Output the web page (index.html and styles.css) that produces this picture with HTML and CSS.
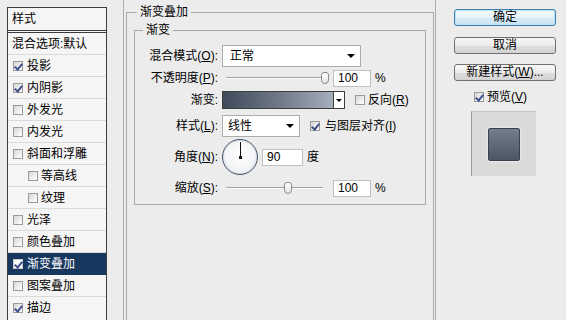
FILE: index.html
```html
<!DOCTYPE html>
<html>
<head>
<meta charset="utf-8">
<title>图层样式</title>
<link rel="stylesheet" href="styles.css">
</head>
<body>
<div class="dialog">
  <div class="styles-list">
    <div class="list-head">样式</div>
    <div class="item blend">混合选项:默认</div>
    <div class="item"><span class="cb on"></span>投影</div>
    <div class="item"><span class="cb on"></span>内阴影</div>
    <div class="item"><span class="cb"></span>外发光</div>
    <div class="item"><span class="cb"></span>内发光</div>
    <div class="item"><span class="cb"></span>斜面和浮雕</div>
    <div class="item sub"><span class="cb"></span>等高线</div>
    <div class="item sub"><span class="cb"></span>纹理</div>
    <div class="item"><span class="cb"></span>光泽</div>
    <div class="item"><span class="cb"></span>颜色叠加</div>
    <div class="item selected"><span class="cb on"></span>渐变叠加</div>
    <div class="item"><span class="cb"></span>图案叠加</div>
    <div class="item last"><span class="cb on"></span>描边</div>
  </div>

  <div class="main">
    <fieldset class="outer">
      <legend>渐变叠加</legend>
      <fieldset class="inner">
        <legend>渐变</legend>
        <div class="form">
          <label>混合模式(<u>O</u>):</label>
          <div class="ctrl">
            <div class="select w-blend"><span>正常</span><span class="arrow"></span></div>
          </div>

          <label>不透明度(<u>P</u>):</label>
          <div class="ctrl">
            <div class="slider s-opacity"><span class="track"></span><span class="thumb" style="left:95px"></span></div>
            <div class="num n-opacity">100</div>
            <span class="pct">%</span>
          </div>

          <label>渐变:</label>
          <div class="ctrl">
            <div class="grad"></div>
            <div class="grad-btn"><span class="arrow small"></span></div>
            <span class="cb gap-cb"></span><span class="cb-text">反向(<u>R</u>)</span>
          </div>

          <label>样式(<u>L</u>):</label>
          <div class="ctrl">
            <div class="select w-style"><span>线性</span><span class="arrow"></span></div>
            <span class="cb on gap-cb"></span><span class="cb-text wide">与图层对齐(<u>I</u>)</span>
          </div>

          <label>角度(<u>N</u>):</label>
          <div class="ctrl">
            <div class="dial"><span class="hand"></span><span class="dot"></span></div>
            <div class="num n-angle">90</div>
            <span class="unit">度</span>
          </div>

          <label>缩放(<u>S</u>):</label>
          <div class="ctrl">
            <div class="slider s-scale"><span class="track"></span><span class="thumb" style="left:58px"></span></div>
            <div class="num n-scale">100</div>
            <span class="pct">%</span>
          </div>
        </div>
      </fieldset>
    </fieldset>
  </div>

  <div class="side">
    <button class="btn default">确定</button>
    <button class="btn">取消</button>
    <button class="btn">新建样式(<u>W</u>)...</button>
    <div class="preview-check"><span class="cb on"></span><span>预览(<u>V</u>)</span></div>
    <div class="preview"><div class="swatch"></div></div>
  </div>
</div>
</body>
</html>
```

FILE: styles.css
```css
* { box-sizing: border-box; }
html, body { margin: 0; padding: 0; }
body {
  width: 566px;
  height: 320px;
  overflow: hidden;
  background: #ececec;
  color: #000;
  font: 12px/16px "Liberation Sans", "Noto Sans CJK SC", sans-serif;
}
u { text-decoration: underline; text-underline-offset: 1px; }

.dialog { display: flex; align-items: flex-start; height: 320px; }

/* ---------- left list ---------- */
.styles-list {
  flex: none;
  margin: 7px 0 0 7px;
  width: 100px;
  height: 313px;
  overflow: hidden;
  border: 1px solid #3c3c3c;
  border-bottom: none;
  background: #f5f5f5;
}
.list-head {
  height: 25px;
  line-height: 22px;
  padding-left: 4px;
  border-bottom: 3px double #3c3c3c;
}
.item {
  height: 22px;
  display: flex;
  align-items: center;
  gap: 4px;
  padding-left: 5px;
  border-bottom: 1px solid #dadada;
  white-space: nowrap;
}
.item.last { height: 21px; border-bottom: none; }
.item.blend { padding-left: 4px; }
.item.sub { padding-left: 20px; gap: 3px; }
.item.selected { background: #17375e; color: #fff; border-bottom-color: #17375e; }
.item.selected .cb { background: #fff; border-color: #c9c9c9; }

/* ---------- checkbox ---------- */
.cb {
  flex: none;
  position: relative;
  display: inline-block;
  width: 10px;
  height: 10px;
  border: 1px solid #9a9a9a;
  background: linear-gradient(135deg, #d6d6d6, #f4f4f4 70%, #fff);
}
.cb.on::after {
  content: "";
  position: absolute;
  left: 2px;
  top: 0px;
  width: 3px;
  height: 6px;
  border-right: 2px solid #3e4f8c;
  border-bottom: 2px solid #3e4f8c;
  transform: rotate(40deg);
}

/* ---------- main group ---------- */
.main {
  flex: none;
  margin-left: 16px;
  width: 313px;
  height: 320px;
  overflow: hidden;
  border-left: 1px solid #acacac;
  border-right: 1px solid #acacac;
  padding: 0 1px 0 2px;
}
fieldset { margin: 0; min-width: 0; border: 1px solid #a9a9a9; }
legend { line-height: 16px; padding: 0 3px; }
.outer { margin-top: 4px; padding: 0 7px; height: 316px; border-bottom: none; }
.outer > legend { margin-left: 3px; }
.inner { margin-top: 2px; padding: 7px 0 1px; }
.inner > legend { margin-left: 8px; }

.form {
  display: grid;
  grid-template-columns: 83px 1fr;
  grid-template-rows: 22px 22px 22px 30px 32px 30px;
  column-gap: 4px;
  align-items: center;
}
.form label { text-align: right; white-space: nowrap; }
.ctrl { display: flex; align-items: center; height: 100%; white-space: nowrap; }

.select {
  display: flex;
  align-items: center;
  justify-content: space-between;
  height: 22px;
  padding: 0 5px 0 7px;
  background: #fff;
  border: 1px solid #acacac;
}
.w-blend { width: 139px; }
.w-style { width: 78px; padding-left: 5px; }
.arrow {
  width: 0; height: 0;
  border-left: 4px solid transparent;
  border-right: 4px solid transparent;
  border-top: 4px solid #000;
}
.arrow.small { border-left-width: 3px; border-right-width: 3px; border-top-width: 3px; }

.slider { position: relative; height: 14px; margin-left: 4px; }
.s-opacity { width: 102px; }
.s-scale { width: 97px; }
.track {
  position: absolute;
  left: 0; right: 0; top: 6px;
  height: 2px;
  border-top: 1px solid #a0a0a0;
  border-bottom: 1px solid #fff;
}
.thumb {
  position: absolute;
  top: 1px;
  width: 8px;
  height: 12px;
  border: 1px solid #8c8c8c;
  border-radius: 3px 3px 4px 4px;
  background: linear-gradient(#fff, #e4e4e4);
}
.num {
  height: 17px;
  line-height: 15px;
  padding-left: 4px;
  background: #fff;
  border: 1px solid #c0c0c0;
}
.n-opacity { width: 38px; margin-left: 5px; }
.n-scale { width: 38px; margin-left: 10px; }
.n-angle { width: 41px; margin-left: 4px; }
.pct { margin-left: 4px; }
.unit { margin-left: 4px; }

.grad {
  width: 112px;
  height: 18px;
  border: 1px solid #3d3d3d;
  background: linear-gradient(to right, #3f4a5a, #6e7887 50%, #a5aebb);
}
.grad-btn {
  width: 12px;
  height: 18px;
  margin-left: -1px;
  display: flex;
  align-items: center;
  justify-content: center;
  background: #fff;
  border: 1px solid #3d3d3d;
}
.gap-cb { margin-left: 10px; }
.cb-text { margin-left: 3px; }
.cb-text.wide { margin-left: 5px; }

.dial {
  position: relative;
  width: 36px;
  height: 36px;
  border-radius: 50%;
  border: 1px solid #46556b;
  background: radial-gradient(circle at 50% 45%, #fff 0, #f4f5f7 55%, #dde2e8 100%);
  box-shadow: inset 0 0 0 1px #d5dbe3;
}
.hand {
  position: absolute;
  left: 16.5px;
  top: 2px;
  width: 1px;
  height: 15px;
  background: #111;
}
.dot {
  position: absolute;
  left: 15.5px;
  top: 15.5px;
  width: 3px;
  height: 3px;
  background: #111;
}

/* ---------- right side ---------- */
.side {
  flex: none;
  margin-left: 18px;
  width: 102px;
  padding-top: 9px;
  display: flex;
  flex-direction: column;
}
.btn {
  display: block;
  width: 102px;
  height: 17px;
  margin: 0 0 10px;
  padding: 0;
  font: inherit;
  line-height: 15px;
  color: #000;
  border: 1px solid #707070;
  border-radius: 3px;
  background: linear-gradient(#f7f7f7, #ececec 50%, #dedede 51%, #d3d3d3);
}
.btn.default {
  margin-bottom: 11px;
  border-color: #3c7fb1;
  background: linear-gradient(#f4fafd, #e6f3fa 50%, #d5ebf7 51%, #c9e4f3);
  box-shadow: inset 0 0 0 1px #bfe3f6;
}
.preview-check {
  display: flex;
  align-items: center;
  gap: 3px;
  height: 16px;
  margin-top: -2px;
  padding-left: 20px;
}
.preview {
  margin: 6px 0 0 17px;
  width: 65px;
  height: 65px;
  display: flex;
  align-items: center;
  justify-content: center;
  background: #dadada;
  border-left: 1px solid #9a9a9a;
  border-top: 1px solid #c4c4c4;
}
.swatch {
  width: 32px;
  height: 33px;
  border: 1px solid #39424e;
  border-radius: 2px;
  background: linear-gradient(#727e8b, #4b5664);
  box-shadow: 0 0 3px rgba(255,255,255,0.8);
}
```
